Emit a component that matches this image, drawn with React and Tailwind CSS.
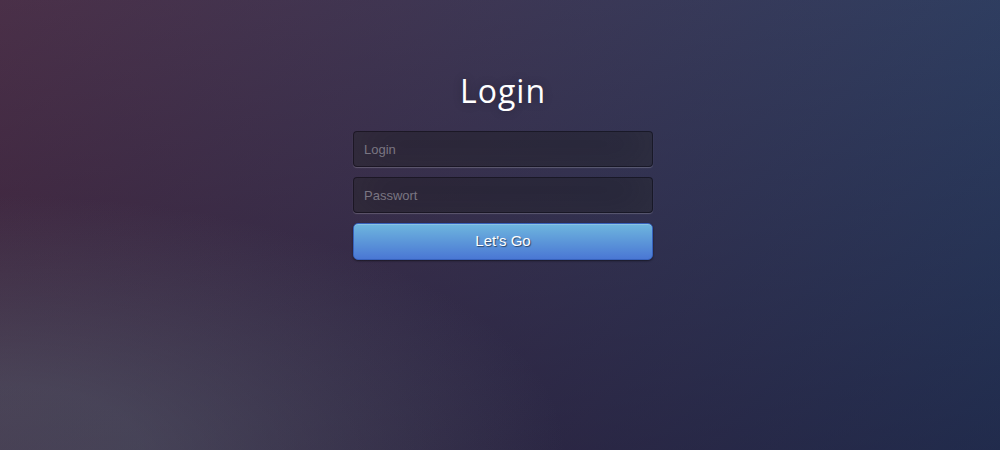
import React from "react";

const App = () => {
  return (
    <div className="w-[1000px] h-[450px] overflow-hidden flex justify-center pl-[6px] bg-[radial-gradient(ellipse_farthest-corner_at_0%_100%,rgba(104,128,138,.35)_10%,rgba(138,114,76,0)_40%),linear-gradient(to_bottom,rgba(57,173,219,.25)_0%,rgba(42,60,87,.4)_100%),linear-gradient(135deg,#500617_0%,#1b2045_100%)]">
      <div className="w-[300px] pt-[69px]">
        <h1 className="text-center text-white text-[32px] leading-[44px] tracking-[1px] font-['Open_Sans',sans-serif] [text-shadow:0_0_10px_rgba(0,0,0,0.3)]">
          Login
        </h1>
        <form className="mt-[18px] flex flex-col gap-[10px] font-['Liberation_Sans',Arial,sans-serif]">
          <input
            type="text"
            placeholder="Login"
            className="w-full h-[36px] px-[10px] text-[13px] text-white placeholder:text-[#7a7682] bg-black/30 border border-black/30 rounded-[4px] outline-none shadow-[inset_0_-5px_45px_rgba(100,100,100,0.2),0_1px_1px_rgba(255,255,255,0.2)]"
          />
          <input
            type="password"
            placeholder="Passwort"
            className="w-full h-[36px] px-[10px] text-[13px] text-white placeholder:text-[#7a7682] bg-black/30 border border-black/30 rounded-[4px] outline-none shadow-[inset_0_-5px_45px_rgba(100,100,100,0.2),0_1px_1px_rgba(255,255,255,0.2)]"
          />
          <button
            type="button"
            className="w-full h-[37px] text-[15px] text-white rounded-[5px] border border-[#3762bc] bg-[linear-gradient(to_bottom,#6eb6de,#4a77d4)] [text-shadow:1px_1px_1px_rgba(0,0,0,0.5)] shadow-[inset_0_1px_0_rgba(255,255,255,0.2),0_1px_2px_rgba(0,0,0,0.5)]"
          >
            Let's Go
          </button>
        </form>
      </div>
    </div>
  );
};

export default App;
